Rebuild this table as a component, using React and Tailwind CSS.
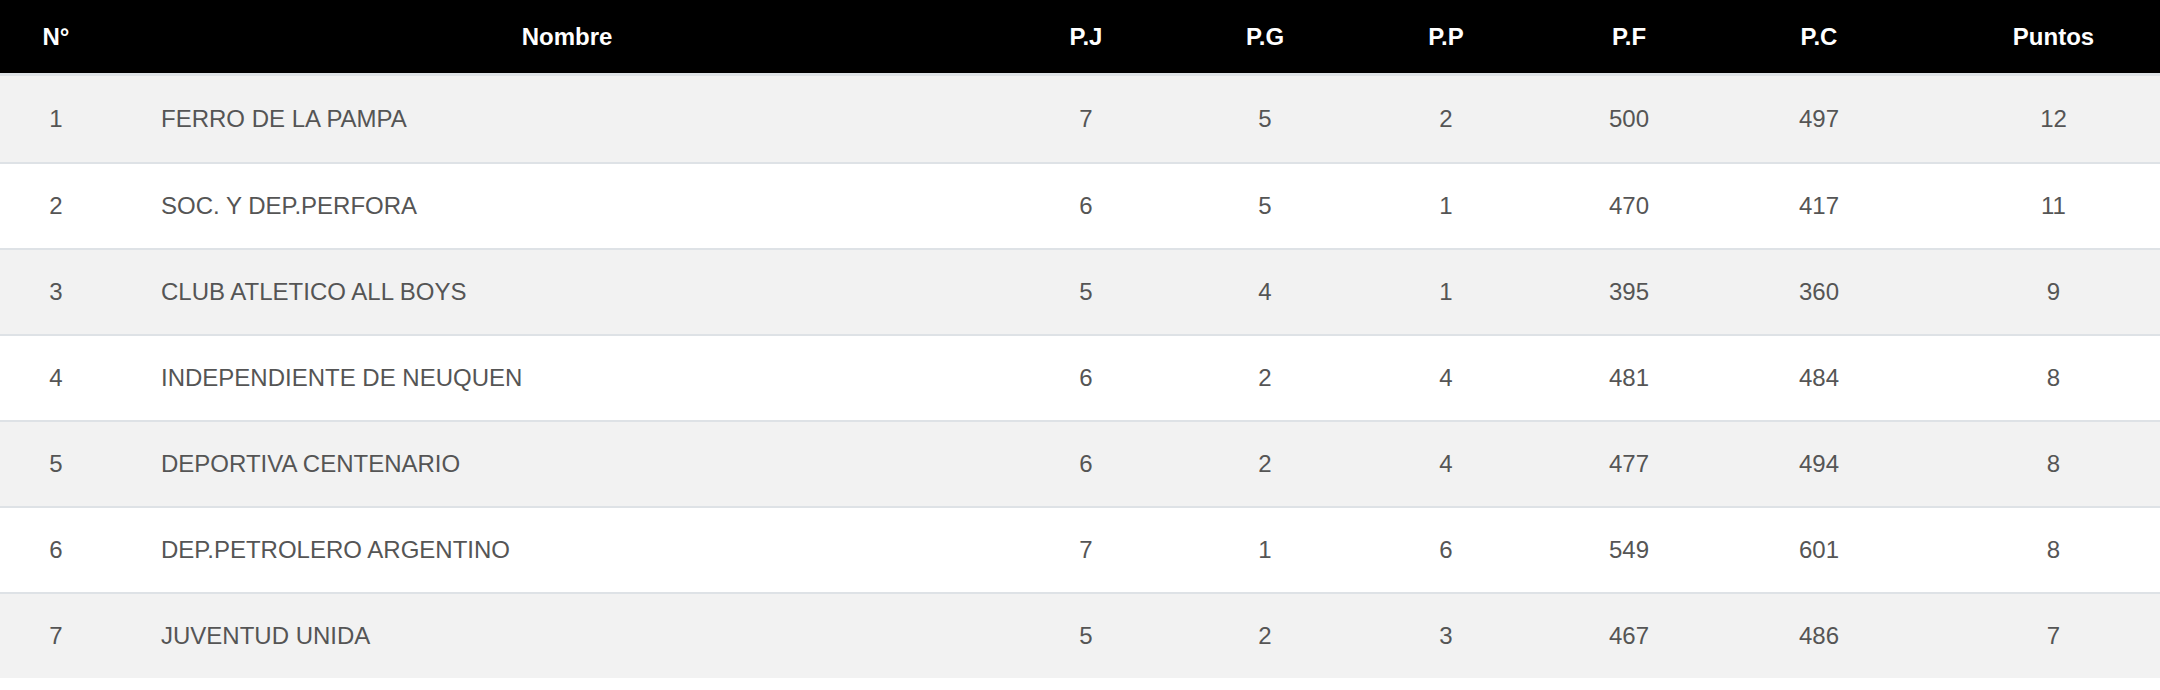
const equipos = [
  { pos: 1, nombre: "FERRO DE LA PAMPA", pj: 7, pg: 5, pp: 2, pf: 500, pc: 497, pts: 12 },
  { pos: 2, nombre: "SOC. Y DEP.PERFORA", pj: 6, pg: 5, pp: 1, pf: 470, pc: 417, pts: 11 },
  { pos: 3, nombre: "CLUB ATLETICO ALL BOYS", pj: 5, pg: 4, pp: 1, pf: 395, pc: 360, pts: 9 },
  { pos: 4, nombre: "INDEPENDIENTE DE NEUQUEN", pj: 6, pg: 2, pp: 4, pf: 481, pc: 484, pts: 8 },
  { pos: 5, nombre: "DEPORTIVA CENTENARIO", pj: 6, pg: 2, pp: 4, pf: 477, pc: 494, pts: 8 },
  { pos: 6, nombre: "DEP.PETROLERO ARGENTINO", pj: 7, pg: 1, pp: 6, pf: 549, pc: 601, pts: 8 },
  { pos: 7, nombre: "JUVENTUD UNIDA", pj: 5, pg: 2, pp: 3, pf: 467, pc: 486, pts: 7 },
];

// columnas fijas para que cada encabezado quede sobre sus datos
const cols =
  "grid grid-cols-[112px_885px_178px_180px_182px_184px_196px_1fr]";

const App = () => {
  return (
    <div className="w-full bg-white font-['Liberation_Sans',Arial,sans-serif] text-[24px]">
      {/* Encabezado */}
      <div className={`${cols} h-[73px] bg-black text-white font-bold border-b-[3px] border-[#dee2e6] box-content`}>
        <div className="pt-[19px] text-center">N°</div>
        <div className="pt-[19px] text-center pl-[25px]">Nombre</div>
        <div className="pt-[19px] text-center">P.J</div>
        <div className="pt-[19px] text-center">P.G</div>
        <div className="pt-[19px] text-center">P.P</div>
        <div className="pt-[19px] text-center">P.F</div>
        <div className="pt-[19px] text-center">P.C</div>
        <div className="pt-[19px] text-center pl-[30px]">Puntos</div>
      </div>

      {/* Filas */}
      {equipos.map((e, i) => (
        <div
          key={e.pos}
          className={`${cols} items-center text-[#555] ${
            i === 0 ? "h-[86px]" : "h-[86px] border-t-2 border-[#dee2e6]"
          } ${i % 2 === 0 ? "bg-[#f2f2f2]" : "bg-white"}`}
        >
          <div className="text-center">{e.pos}</div>
          <div className="pl-[49px]">{e.nombre}</div>
          <div className="text-center">{e.pj}</div>
          <div className="text-center">{e.pg}</div>
          <div className="text-center">{e.pp}</div>
          <div className="text-center">{e.pf}</div>
          <div className="text-center">{e.pc}</div>
          <div className="text-center pl-[30px]">{e.pts}</div>
        </div>
      ))}
    </div>
  );
};

export default App;
